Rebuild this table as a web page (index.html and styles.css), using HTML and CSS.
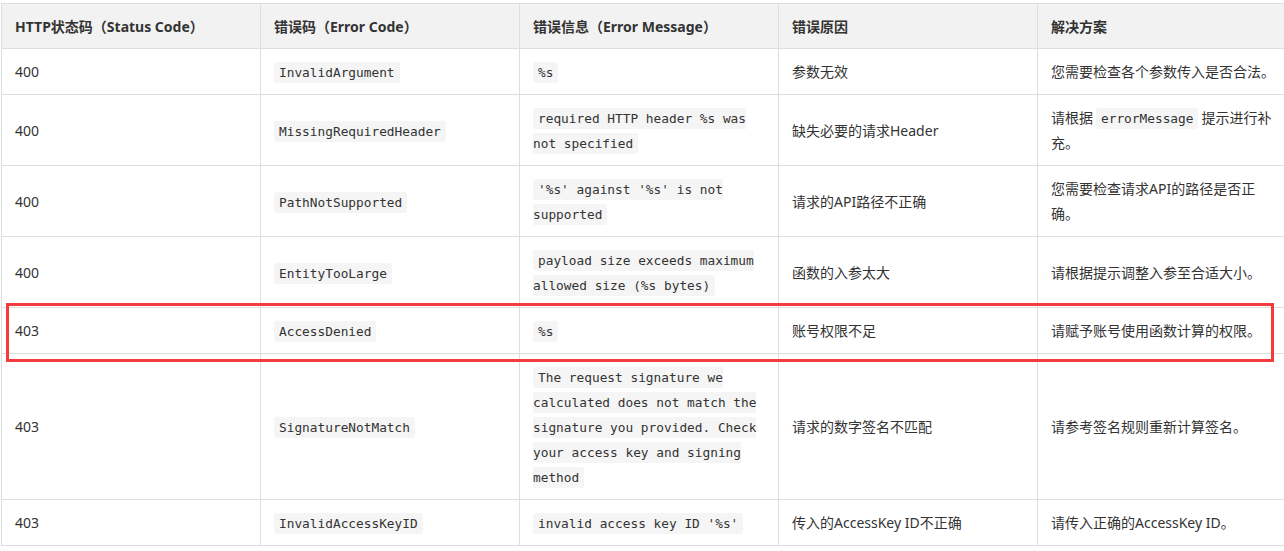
FILE: index.html
```html
<!DOCTYPE html>
<html lang="zh-CN">
<head>
<meta charset="UTF-8">
<meta name="viewport" content="width=device-width, initial-scale=1.0">
<title>错误码</title>
<link rel="stylesheet" href="styles.css">
</head>
<body>
<section class="page">
  <table class="error-table">
    <thead>
      <tr>
        <th>HTTP状态码（Status Code）</th>
        <th>错误码（Error Code）</th>
        <th>错误信息（Error Message）</th>
        <th>错误原因</th>
        <th>解决方案</th>
      </tr>
    </thead>
    <tbody>
      <tr>
        <td>400</td>
        <td><code>InvalidArgument</code></td>
        <td><code>%s</code></td>
        <td>参数无效</td>
        <td>您需要检查各个参数传入是否合法。</td>
      </tr>
      <tr>
        <td>400</td>
        <td><code>MissingRequiredHeader</code></td>
        <td><code>required HTTP header %s was not specified</code></td>
        <td>缺失必要的请求Header</td>
        <td>请根据<code class="inline">errorMessage</code>提示进行补充。</td>
      </tr>
      <tr>
        <td>400</td>
        <td><code>PathNotSupported</code></td>
        <td><code>'%s' against '%s' is not supported</code></td>
        <td>请求的API路径不正确</td>
        <td>您需要检查请求API的路径是否正<br>确。</td>
      </tr>
      <tr>
        <td>400</td>
        <td><code>EntityTooLarge</code></td>
        <td><code>payload size exceeds maximum allowed size (%s bytes)</code></td>
        <td>函数的入参太大</td>
        <td>请根据提示调整入参至合适大小。</td>
      </tr>
      <tr>
        <td>403</td>
        <td><code>AccessDenied</code></td>
        <td><code>%s</code></td>
        <td>账号权限不足</td>
        <td>请赋予账号使用函数计算的权限。</td>
      </tr>
      <tr>
        <td>403</td>
        <td><code>SignatureNotMatch</code></td>
        <td><code>The request signature we calculated does not match the signature you provided. Check your access key and signing method</code></td>
        <td>请求的数字签名不匹配</td>
        <td>请参考签名规则重新计算签名。</td>
      </tr>
      <tr>
        <td>403</td>
        <td><code>InvalidAccessKeyID</code></td>
        <td><code>invalid access key ID '%s'</code></td>
        <td>传入的AccessKey ID不正确</td>
        <td>请传入正确的AccessKey ID。</td>
      </tr>
    </tbody>
  </table>

  <!-- annotation around the AccessDenied row -->
  <div class="highlight"></div>
</section>
</body>
</html>
```

FILE: styles.css
```css
* {
  margin: 0;
  padding: 0;
  box-sizing: border-box;
}

body {
  overflow: hidden;
  background: #fff;
  color: #333;
  font-family: 'Noto Sans', 'Noto Sans CJK SC', sans-serif;
  font-size: 14px;
}

.page {
  position: relative;
  padding: 3px 0 0 1px;
  width: 1297px;
}

.error-table {
  width: 1296px;
  table-layout: fixed;
  border-collapse: collapse;
}

.error-table th,
.error-table td {
  border: 1px solid #dedede;
  padding: 10px 13px;
  line-height: 25px;
  text-align: left;
  vertical-align: middle;
}

.error-table th {
  background: #f2f2f2;
  font-weight: 700;
  padding-bottom: 9px;
}

.error-table code {
  font-family: 'DejaVu Sans Mono', 'Liberation Mono', monospace;
  font-size: 12.8px;
  line-height: 1;
  background: #f5f5f5;
  border-radius: 3px;
  padding: 3px 5px;
  color: #333;
}

.error-table code.inline {
  margin: 0 3px;
}

.highlight {
  position: absolute;
  left: 6px;
  top: 303px;
  width: 1268px;
  height: 59px;
  border: 3px solid #f53b3b;
}
```
